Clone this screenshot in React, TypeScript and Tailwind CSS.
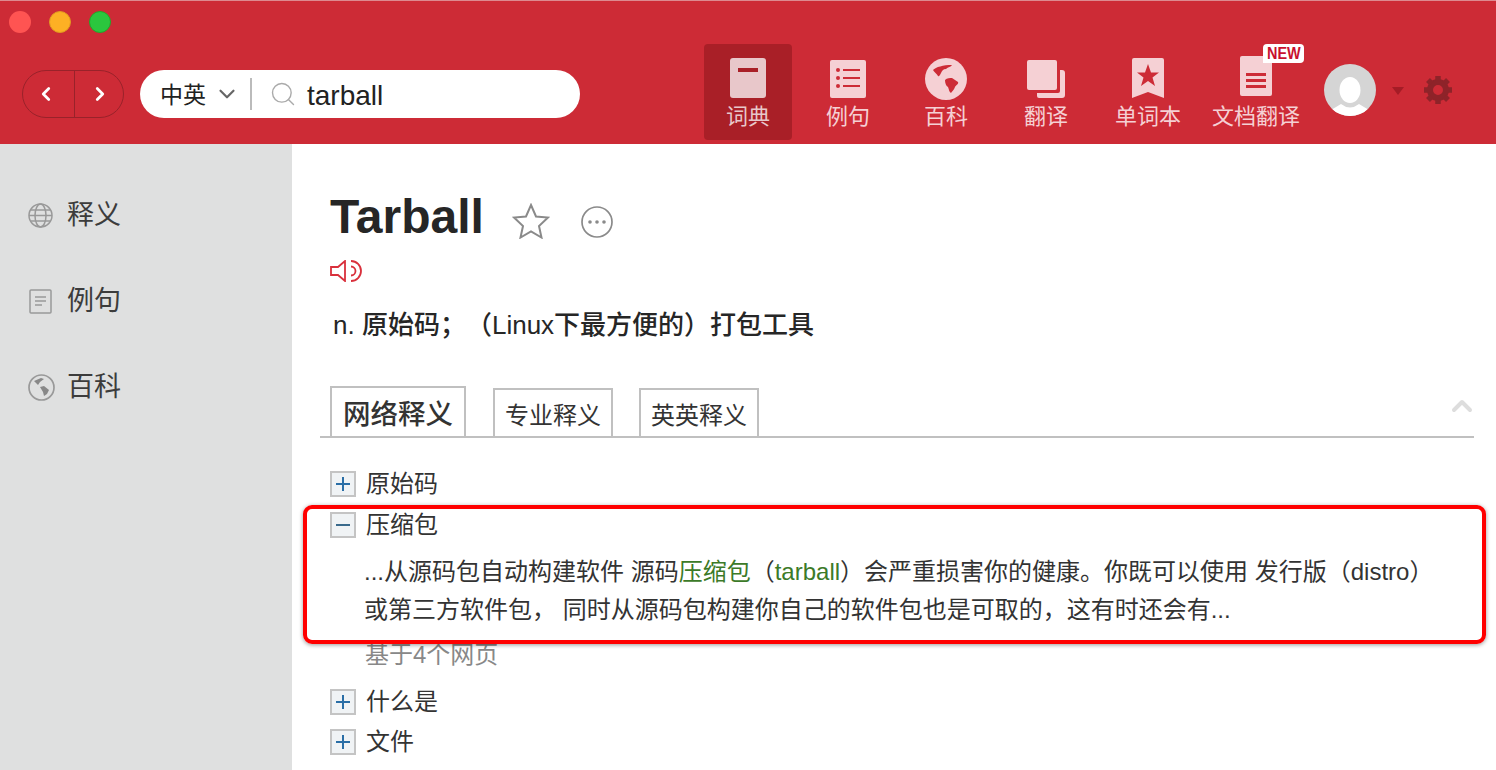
import React from 'react';
import { ChevronDown, ChevronLeft, ChevronRight, ChevronUp, Search } from 'lucide-react';

const CJK = 'font-["Liberation_Sans","Noto_Sans_CJK_SC",sans-serif]';

const BookIcon = () => (
  <svg width="36" height="40" viewBox="0 0 36 40">
    <rect width="36" height="40" rx="3" fill="#e8c7ca" />
    <rect x="8" y="10" width="20" height="4" fill="#a91f27" />
  </svg>
);

const ListIcon = () => (
  <svg width="36" height="38" viewBox="0 0 36 38">
    <rect width="36" height="38" rx="2" fill="#f5d0d4" />
    <g fill="#cd2b36">
      <circle cx="8" cy="10" r="2" />
      <circle cx="8" cy="18" r="2" />
      <circle cx="8" cy="26" r="2" />
      <rect x="13" y="9" width="17" height="2" />
      <rect x="13" y="17" width="17" height="2" />
      <rect x="13" y="25" width="17" height="2" />
    </g>
  </svg>
);

const GlobeIcon = () => (
  <svg width="42" height="42" viewBox="0 0 42 42">
    <circle cx="21" cy="21" r="21" fill="#f5d0d4" />
    <path d="M8 12 C11 9 18 7 27 7 C26 9 23 9 21 11 C18 11 17 13 16 15 C15 17 14 19 13 18 C12 16 9 14 8 12 Z" fill="#cd2b36" />
    <path d="M20 22 C22 20 25 20 27 20 C29 21 31 23 33 24 C34 26 31 27 30 29 C29 32 27 33 26 35 C24 34 24 31 23 29 C21 28 20 25 20 22 Z" fill="#cd2b36" />
  </svg>
);

const CopyIcon = () => (
  <svg width="38" height="38" viewBox="0 0 38 38">
    <path d="M33 10 H35 Q38 10 38 13 V35 Q38 38 35 38 H12 Q10 38 10 36 V33 H31 Q33 33 33 31 Z" fill="#f5d0d4" />
    <rect width="30" height="30" rx="2" fill="#f5d0d4" />
  </svg>
);

const BookmarkIcon = () => (
  <svg className="mb-[2px]" width="32" height="40" viewBox="0 0 32 40">
    <path d="M2 0 H30 Q32 0 32 2 V40 L16 34 L0 40 V2 Q0 0 2 0 Z" fill="#f5d0d4" />
    <path d="M16 6 L19 14.500 L27 14.500 L20.500 19.500 L23 28 L16 23 L9 28 L11.500 19.500 L5 14.500 L13 14.500 Z" fill="#cd2b36" />
  </svg>
);

const DocIcon = () => (
  <svg width="32" height="40" viewBox="0 0 32 40">
    <path d="M2 0 H32 V38 Q32 40 30 40 H2 Q0 40 0 38 V2 Q0 0 2 0 Z" fill="#f5d0d4" />
    <g fill="#cd2b36">
      <rect x="6" y="17" width="20" height="3" />
      <rect x="6" y="23" width="20" height="3" />
      <rect x="6" y="29" width="20" height="3" />
    </g>
  </svg>
);

const Avatar = () => (
  <svg width="52" height="52" viewBox="0 0 52 52">
    <clipPath id="avatar-clip"><circle cx="26" cy="26" r="26" /></clipPath>
    <g clipPath="url(#avatar-clip)">
      <rect width="52" height="52" fill="#d5d5d5" />
      <ellipse cx="26" cy="26" rx="10.500" ry="13" fill="#fff" />
      <path d="M7 46 L17 40 Q26 47 35 40 L45 46 V52 H7 Z" fill="#fff" />
    </g>
  </svg>
);

const Gear = () => (
  <svg width="28" height="28" viewBox="0 0 28 28">
    <circle cx="14" cy="14" r="8" fill="none" stroke="#8e2329" strokeWidth="6" />
    <g stroke="#8e2329" strokeWidth="5.500">
      <path d="M14 0 V5" />
      <path d="M14 23 V28" />
      <path d="M0 14 H5" />
      <path d="M23 14 H28" />
      <path d="M4 4 L7.500 7.500" />
      <path d="M20.500 20.500 L24 24" />
      <path d="M4 24 L7.500 20.500" />
      <path d="M20.500 7.500 L24 4" />
    </g>
  </svg>
);

const Toggle = ({ open }: { open?: boolean }) => (
  <span className="w-[26px] h-[26px] shrink-0 border-2 border-[#c4c4c4] bg-[#f0f3f5] flex items-center justify-center">
    <svg width="14" height="14" viewBox="0 0 14 14">
      <rect x="0" y="6" width="14" height="2" fill={open ? '#3a6a8c' : '#2a6ea6'} />
      {!open && <rect x="6" y="0" width="2" height="14" fill="#2a6ea6" />}
    </svg>
  </span>
);

const navItems = [
  { label: '例句', icon: <ListIcon />, cls: 'ml-[12px]' },
  { label: '百科', icon: <GlobeIcon />, cls: 'ml-[10px]' },
  { label: '翻译', icon: <CopyIcon />, cls: 'ml-[12px]' },
  { label: '单词本', icon: <BookmarkIcon />, cls: 'ml-[14px]' },
];

export default function App() {
  return (
    <div className={`relative w-[1496px] h-[770px] overflow-hidden bg-white [text-spacing-trim:space-all] ${CJK}`}>
      <header className="h-[144px] bg-[#cd2b36] border-t border-[#dd8a90]">
        <div className="h-[43px] pl-[9px] pt-[10px] flex gap-[18px]">
          <span className="w-[22px] h-[22px] rounded-full bg-[#ff5452]" />
          <span className="w-[22px] h-[22px] rounded-full bg-[#fdb024] border border-[#e09a20]" />
          <span className="w-[22px] h-[22px] rounded-full bg-[#2bc63e] border border-[#1faa2a]" />
        </div>
        <div className="flex items-start">
          <div className="ml-[22px] mt-[26px] w-[102px] h-[48px] rounded-full border border-[#99222a] flex text-white">
            <button className="flex-1 flex items-center justify-center border-r border-[#99222a] pr-[4px]">
              <ChevronLeft size={22} strokeWidth={3} />
            </button>
            <button className="flex-1 flex items-center justify-center pl-[2px]">
              <ChevronRight size={22} strokeWidth={3} />
            </button>
          </div>
          <div className="ml-[16px] mt-[26px] w-[440px] h-[48px] rounded-full bg-white flex items-center pl-[20px]">
            <span className="text-[23px] text-[#222] w-[46px] pt-[2px]">中英</span>
            <ChevronDown size={26} strokeWidth={2} className="ml-[8px] text-[#666]" />
            <span className="ml-[10px] w-[2px] h-[32px] bg-[#bbbbbb]" />
            <Search size={28} strokeWidth={1.2} className="ml-[17px] text-[#aaaaaa]" />
            <span className="ml-[10px] pt-[3px] text-[28px] leading-none text-[#222]">tarball</span>
          </div>
          <nav className="ml-[124px] flex items-start text-[#f5d0d4]">
            <div className="w-[88px] h-[96px] rounded-[4px] bg-[#a91f27] flex flex-col items-center pt-[14px] text-[#e8c7ca]">
              <BookIcon />
              <span className="mt-[5px] text-[22px] leading-[28px]">词典</span>
            </div>
            {navItems.map(item => (
              <div key={item.label} className={`w-[88px] h-[96px] flex flex-col items-center pt-[14px] ${item.cls}`}>
                <div className="h-[42px] flex items-center justify-center">{item.icon}</div>
                <span className="mt-[3px] text-[22px] leading-[28px] whitespace-nowrap">{item.label}</span>
              </div>
            ))}
            <div className="relative ml-[20px] w-[88px] h-[96px] flex flex-col items-center pt-[12px]">
              <DocIcon />
              <span className="mt-[7px] text-[22px] leading-[28px] whitespace-nowrap">文档翻译</span>
              <span className="absolute left-[51px] top-0 w-[41px] h-[19px] rounded-[4px] rounded-bl-none bg-white text-[#c8102e] text-[17px] leading-[19px] font-bold text-center">
                <span className="inline-block scale-x-[0.85]">NEW</span>
              </span>
            </div>
          </nav>
          <div className="ml-[24px] mt-[20px]"><Avatar /></div>
          <span className="ml-[16px] mt-[43px] w-0 h-0 border-x-[6px] border-x-transparent border-t-[8px] border-t-[#a51c26]" />
          <div className="ml-[20px] mt-[32px]"><Gear /></div>
        </div>
      </header>

      <div className="flex h-[626px]">
        <aside className="w-[292px] shrink-0 bg-[#dfe0e0] pl-[28px] pt-[51px] text-[#3c3c3c] text-[27px]">
          <div className="h-[40px] flex items-center gap-[14px]">
            <svg width="25" height="25" viewBox="0 0 25 25" fill="none" stroke="#999" strokeWidth="1.500">
              <circle cx="12.500" cy="12.500" r="11.500" />
              <ellipse cx="12.500" cy="12.500" rx="5.500" ry="11.500" />
              <path d="M1 12.500 H24 M3 7 H22 M3 18 H22" />
            </svg>
            <span>释义</span>
          </div>
          <div className="mt-[46px] h-[40px] flex items-center gap-[14px]">
            <svg width="25" height="25" viewBox="0 0 25 25" fill="none" stroke="#999" strokeWidth="1.500">
              <rect x="2" y="1" width="21" height="23" rx="1" />
              <path d="M7 8 H18 M7 12 H18 M7 16 H14" />
            </svg>
            <span>例句</span>
          </div>
          <div className="mt-[46px] h-[40px] flex items-center gap-[12px]">
            <svg width="27" height="27" viewBox="0 0 27 27">
              <circle cx="13.500" cy="13.500" r="12.500" fill="none" stroke="#999" strokeWidth="1.700" />
              <path d="M6 7 L13 4 L16 5 L12 8 L10 11 Z" fill="#888" />
              <path d="M12 13 L16 12 L21 16 L19 20 L16 22 L15 18 Z" fill="#888" />
            </svg>
            <span>百科</span>
          </div>
        </aside>

        <main className="flex-1 pl-[28px] pr-[22px]">
          <div className="pl-[10px] pt-[44px] h-[116px] flex items-start">
            <h1 className="text-[48px] leading-[58px] font-bold text-[#262626]">Tarball</h1>
            <svg className="ml-[28px] mt-[15px]" width="38" height="36" viewBox="0 0 38 36" fill="none" stroke="#8a8a8a" strokeWidth="2">
              <path d="M19 2 L24 13.500 L36 14.500 L27 23 L29.500 34.500 L19 28.500 L8.500 34.500 L11 23 L2 14.500 L14 13.500 Z" />
            </svg>
            <svg className="ml-[31px] mt-[18px]" width="32" height="32" viewBox="0 0 32 32" fill="none">
              <circle cx="16" cy="16" r="15" stroke="#8a8a8a" strokeWidth="1.700" />
              <circle cx="9" cy="16" r="1.800" fill="#8a8a8a" />
              <circle cx="16" cy="16" r="1.800" fill="#8a8a8a" />
              <circle cx="23" cy="16" r="1.800" fill="#8a8a8a" />
            </svg>
          </div>
          <div className="pl-[10px] h-[24px]">
            <svg width="32" height="22" viewBox="0 0 32 22" fill="none" stroke="#d9303c" strokeWidth="1.800">
              <path d="M15 1 V21 L8 15 H1 V7 H8 Z" />
              <path d="M21 6.500 A4.500 4.500 0 0 1 21 15.500" />
              <path d="M21 1 A10 10 0 0 1 21 21" />
            </svg>
          </div>
          <p className="pl-[13px] mt-[23px] h-[36px] text-[26px] leading-[36px] text-[#262626] whitespace-nowrap">
            n. <span className="font-medium">原始码；（</span>Linux<span className="font-medium">下最方便的）打包工具</span>
          </p>

          <div className="mt-[43px] pl-[10px] h-[52px] flex items-end border-b-2 border-[#c0c0c0] relative">
            <div className="w-[136px] h-[50px] pt-[5px] border-2 border-b-0 border-[#c0c0c0] flex items-center justify-center text-[27.500px] font-medium text-[#333]">网络释义</div>
            <div className="ml-[27px] w-[120px] h-[48px] pt-[5px] border-2 border-b-0 border-[#c0c0c0] flex items-center justify-center text-[24px] text-[#333]">专业释义</div>
            <div className="ml-[26px] w-[120px] h-[48px] pt-[5px] border-2 border-b-0 border-[#c0c0c0] flex items-center justify-center text-[24px] text-[#333]">英英释义</div>
            <ChevronUp size={32} strokeWidth={3} className="absolute right-[-4px] top-[4px] text-[#dddddd]" />
          </div>

          <ul className="mt-[32px] pl-[10px] text-[24px] leading-[28px] text-[#333]">
            <li className="flex items-center gap-[10px] h-[28px]"><Toggle />原始码</li>
            <li className="mt-[13px] flex items-center gap-[10px] h-[28px]"><Toggle open />压缩包</li>
            <li className="pl-[34px] mt-[14px] leading-[38px] whitespace-nowrap">
              ...从源码包自动构建软件 源码<span className="text-[#3c7a28]">压缩包</span>（<span className="text-[#3c7a28]">tarball</span>）会严重损害你的健康。你既可以使用 发行版（distro）
              <br />
              或第三方软件包， 同时从源码包构建你自己的软件包也是可取的，这有时还会有...
            </li>
            <li className="pl-[35px] mt-[12px] text-[#888]">基于4个网页</li>
            <li className="mt-[19px] flex items-center gap-[10px] h-[28px]"><Toggle />什么是</li>
            <li className="mt-[12px] flex items-center gap-[10px] h-[28px]"><Toggle />文件</li>
          </ul>
        </main>
      </div>

      {/* annotation drawn over the screenshot */}
      <div className="absolute left-[303px] top-[505px] w-[1183px] h-[139px] border-4 border-[#ff0000] rounded-[9px] shadow-[0_1px_4px_rgba(0,0,0,0.4)]" />
    </div>
  );
}
